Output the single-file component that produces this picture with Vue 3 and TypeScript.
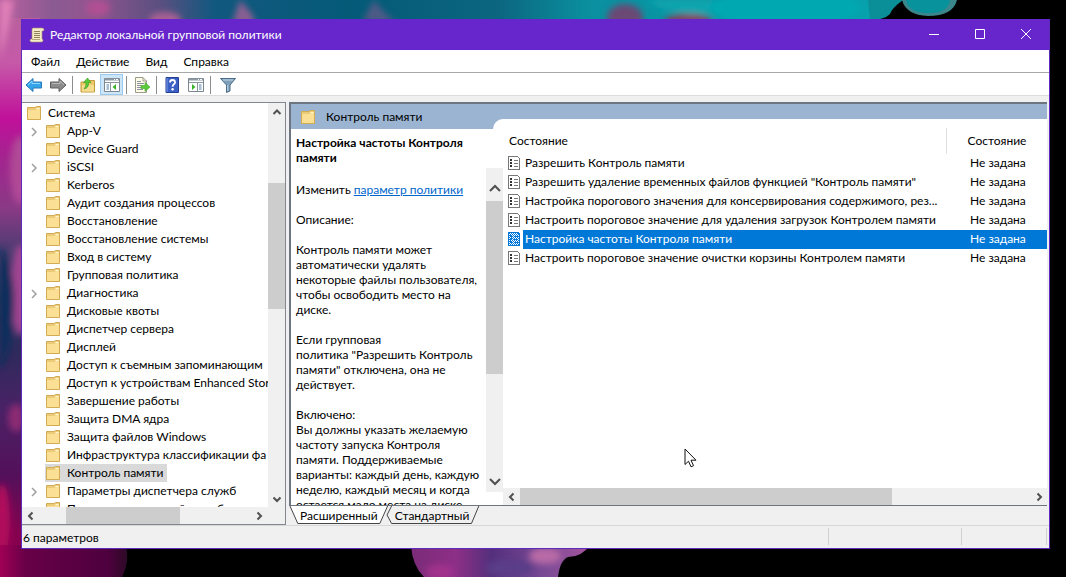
<script setup lang="ts">
import { ref } from 'vue'

interface TreeNode {
  label: string
  expandable?: boolean
}

interface Policy {
  name: string
  state: string
}

const menu: string[] = ['Файл', 'Действие', 'Вид', 'Справка']

const nodes: TreeNode[] = [
  { label: 'App-V', expandable: true },
  { label: 'Device Guard' },
  { label: 'iSCSI', expandable: true },
  { label: 'Kerberos' },
  { label: 'Аудит создания процессов' },
  { label: 'Восстановление' },
  { label: 'Восстановление системы' },
  { label: 'Вход в систему' },
  { label: 'Групповая политика' },
  { label: 'Диагностика', expandable: true },
  { label: 'Дисковые квоты' },
  { label: 'Диспетчер сервера' },
  { label: 'Дисплей' },
  { label: 'Доступ к съемным запоминающим' },
  { label: 'Доступ к устройствам Enhanced Stor' },
  { label: 'Завершение работы' },
  { label: 'Защита DMA ядра' },
  { label: 'Защита файлов Windows' },
  { label: 'Инфраструктура классификации фа' },
  { label: 'Контроль памяти' },
  { label: 'Параметры диспетчера служб', expandable: true },
  { label: 'Параметры почтовой службы' },
]

const policies: Policy[] = [
  { name: 'Разрешить Контроль памяти', state: 'Не задана' },
  { name: 'Разрешить удаление временных файлов функцией "Контроль памяти"', state: 'Не задана' },
  { name: 'Настройка порогового значения для консервирования содержимого, рез...', state: 'Не задана' },
  { name: 'Настроить пороговое значение для удаления загрузок Контролем памяти', state: 'Не задана' },
  { name: 'Настройка частоты Контроля памяти', state: 'Не задана' },
  { name: 'Настроить пороговое значение очистки корзины Контролем памяти', state: 'Не задана' },
]

const activeNode = ref('Контроль памяти')
const activePolicy = ref(4)
</script>

<template>
  <div class="desktop">
    <svg class="wallpaper" viewBox="0 0 1066 577" preserveAspectRatio="none" aria-hidden="true">
      <defs>
        <linearGradient id="wpTop" x1="0" x2="1" y1="0" y2="0">
          <stop offset="0" stop-color="#b8609e" />
          <stop offset="0.06" stop-color="#8a5a92" />
          <stop offset="0.1" stop-color="#93558f" />
          <stop offset="0.18" stop-color="#5a4f80" />
          <stop offset="0.24" stop-color="#12587f" />
          <stop offset="0.4" stop-color="#045a78" />
          <stop offset="0.56" stop-color="#0c6680" />
          <stop offset="0.66" stop-color="#0a8f9f" />
          <stop offset="1" stop-color="#06a3ad" />
        </linearGradient>
        <linearGradient id="wpLeft" x1="0" x2="0" y1="0" y2="1">
          <stop offset="0" stop-color="#b8609e" />
          <stop offset="0.08" stop-color="#c659a8" />
          <stop offset="0.18" stop-color="#c0109a" />
          <stop offset="0.25" stop-color="#a3248f" />
          <stop offset="0.34" stop-color="#8a3a86" />
          <stop offset="0.42" stop-color="#4a3c70" />
          <stop offset="0.5" stop-color="#1f335f" />
          <stop offset="0.6" stop-color="#2f2a5c" />
          <stop offset="0.7" stop-color="#4a2266" />
          <stop offset="0.82" stop-color="#54105a" />
          <stop offset="0.92" stop-color="#85024f" />
          <stop offset="1" stop-color="#8a0050" />
        </linearGradient>
        <linearGradient id="wpCorner" x1="0" x2="1" y1="0" y2="0">
          <stop offset="0" stop-color="#a00055" />
          <stop offset="0.2" stop-color="#680048" />
          <stop offset="0.85" stop-color="#4e003e" />
          <stop offset="1" stop-color="#2c0a26" />
        </linearGradient>
        <linearGradient id="wpInk" x1="0" x2="1" y1="0" y2="0">
          <stop offset="0" stop-color="#7a2b78" />
          <stop offset="0.25" stop-color="#8d2f86" />
          <stop offset="0.45" stop-color="#54307c" />
          <stop offset="0.75" stop-color="#7a4a96" />
          <stop offset="1" stop-color="#a5559b" />
        </linearGradient>
        <filter id="wpSoft"><feGaussianBlur stdDeviation="3" /></filter>
      </defs>
      <rect width="1066" height="577" fill="#000" />
      <path d="M0 0H890L873 22V40H0Z" fill="url(#wpTop)" />
      <rect y="18" width="40" height="559" fill="url(#wpLeft)" />
      <g filter="url(#wpSoft)">
        <path d="M0 0H14L8 30L0 60Z" fill="#e07fb8" />
        <ellipse cx="98" cy="8" rx="12" ry="8" fill="#b04f92" />
        <ellipse cx="165" cy="20" rx="16" ry="8" fill="#a86093" />
        <path d="M240 0L252 14L256 24H232Z" fill="#8a5f92" />
        <path d="M374 0L384 12L396 22H362Z" fill="#4d5a86" />
        <ellipse cx="625" cy="18" rx="18" ry="14" fill="#6a4a74" />
        <ellipse cx="688" cy="22" rx="24" ry="8" fill="#84405e" />
        <path d="M645 0H720L708 14H690L660 8Z" fill="#0ba5af" />
        <ellipse cx="785" cy="8" rx="75" ry="18" fill="#05a9b2" />
        <ellipse cx="20" cy="170" rx="10" ry="34" fill="#b04a96" />
        <ellipse cx="20" cy="290" rx="9" ry="46" fill="#a04590" />
        <path d="M0 245Q16 270 14 310Q12 350 0 370Z" fill="#0d2f5c" />
        <ellipse cx="16" cy="418" rx="8" ry="14" fill="#8b2a73" />
        <ellipse cx="2" cy="520" rx="8" ry="36" fill="#b00a5c" />
      </g>
      <path d="M868 0H903Q892 8 890 14Q884 20 870 20Z" fill="#0a8f99" />
      <path d="M902 0H957Q953 16 928 16Q906 15 902 0Z" fill="#3a868b" />
      <path d="M906 0H950Q948 14 926 13Q908 12 906 0Z" fill="#08929c" />
      <path d="M0 545H126Q130 562 122 577H0Z" fill="url(#wpCorner)" />
      <path d="M411 545H590Q582 557 568 557Q560 560 558 577H424Q412 565 411 545Z" fill="url(#wpInk)" />
      <g filter="url(#wpSoft)">
        <ellipse cx="440" cy="572" rx="14" ry="8" fill="#a0308c" />
        <ellipse cx="545" cy="556" rx="16" ry="8" fill="#b86aa6" />
        <ellipse cx="510" cy="568" rx="24" ry="8" fill="#5a3c88" />
      </g>
    </svg>

    <main class="window">
      <header class="titlebar">
        <svg class="app-icon" viewBox="0 0 16 16" aria-hidden="true">
          <path d="M4 1H13Q15 1 15 3Q15 4 13.500 4H13V12Q14 12 14 13.500Q14 15 12 15H3Q1 15 1 13.500Q1 12 2.500 12H3V3Q3 1 4 1Z" fill="#f4ecc8" stroke="#a9966a" stroke-width=".6" />
          <path d="M5 4.500H11M5 6.500H11M5 8.500H11M5 10.500H11" stroke="#8f8259" stroke-width="1" />
          <path d="M3 12.500H11" stroke="#b5a67c" />
        </svg>
        <h1>Редактор локальной групповой политики</h1>
        <div class="window-buttons">
          <button type="button" aria-label="Свернуть">
            <svg viewBox="0 0 12 12"><path d="M1 5.500H11" /></svg>
          </button>
          <button type="button" aria-label="Развернуть">
            <svg viewBox="0 0 12 12"><path d="M1.500 .500H10.500V9.500H1.500Z" /></svg>
          </button>
          <button type="button" aria-label="Закрыть">
            <svg viewBox="0 0 12 12"><path d="M1 0L11 10M11 0L1 10" /></svg>
          </button>
        </div>
      </header>

      <nav class="menubar">
        <button v-for="item in menu" :key="item" type="button">{{ item }}</button>
      </nav>

      <div class="toolbar" role="toolbar" aria-label="Панель инструментов">
        <button type="button" aria-label="Назад">
          <svg viewBox="0 0 18 16"><path d="M1 8L8 1.500V5H16.500V11H8V14.500Z" fill="#35a5ea" stroke="#2b78b8" /><path d="M3 8L7 4V6.500H15" fill="none" stroke="#8fd6fb" /></svg>
        </button>
        <button type="button" aria-label="Вперёд">
          <svg viewBox="0 0 18 16"><path d="M17 8L10 1.500V5H1.500V11H10V14.500Z" fill="#8b8b8b" stroke="#5f5f5f" /><path d="M3 6.500H11V4L15 8" fill="none" stroke="#b9b9b9" /></svg>
        </button>
        <span class="separator"></span>
        <button type="button" aria-label="На уровень вверх">
          <svg viewBox="0 0 18 16"><path d="M2 5H7L8 3.500H15.500V15H2Z" fill="#ecc968" stroke="#c39b3c" /><path d="M3 8H15V14.500H3Z" fill="#f6dd8d" /><path d="M5 12Q10 11 9.500 5.500H12L8.500 1L4.500 5.500H7Q7.500 9 5 12Z" fill="#58c936" stroke="#3b9a22" stroke-width=".6" /></svg>
        </button>
        <button type="button" class="pressed" aria-label="Показать дерево консоли">
          <svg viewBox="0 0 18 16"><path d="M1.500 1.500H16.500V14.500H1.500Z" fill="#fff" stroke="#7b8791" /><path d="M2 2.500H16" stroke="#8c99a3" stroke-width="2" /><path d="M11 2.500H12M13 2.500H15" stroke="#fff" /><path d="M2 5.500H16M7.500 6V14" stroke="#8a97a0" /><path d="M3.500 8H6M3.500 10H6M3.500 12H6" stroke="#4f7fae" /><path d="M13 7V13L9.500 10Z" fill="#39b52a" /></svg>
        </button>
        <span class="separator"></span>
        <button type="button" aria-label="Экспорт списка">
          <svg viewBox="0 0 18 16"><path d="M2.500.500H10L13.500 4V15.500H2.500Z" fill="#fffde9" stroke="#9b9b8a" /><path d="M10 .500V4H13.500" fill="none" stroke="#9b9b8a" /><path d="M4 4.500H8M4 6.500H11M4 8.500H8M4 10.500H8M4 12.500H10" stroke="#8b91a0" /><path d="M8 8.500H12V5.500L17 10L12 14.500V11.500H8Z" fill="#5acb3a" stroke="#42a52a" stroke-width=".6" /></svg>
        </button>
        <span class="separator"></span>
        <button type="button" aria-label="Справка">
          <svg viewBox="0 0 18 16"><path d="M3 .500H15.500V15.500H3Z" fill="#3b5fc4" stroke="#243f91" /><path d="M4 1V15" stroke="#7b98e6" /><path d="M7 5.500Q7 3 9.500 3Q12 3 12 5.200Q12 6.600 10.600 7.500Q9.600 8.200 9.600 9.800" fill="none" stroke="#fff" stroke-width="1.800" /><circle cx="9.600" cy="12.300" r="1.200" fill="#fff" /></svg>
        </button>
        <button type="button" aria-label="Показать область действий">
          <svg viewBox="0 0 18 16"><path d="M1.500 1.500H16.500V14.500H1.500Z" fill="#fff" stroke="#7b8791" /><path d="M2 2.500H16" stroke="#8c99a3" stroke-width="2" /><path d="M11 2.500H12M13 2.500H15" stroke="#fff" /><path d="M2 5.500H16M10.500 6V14" stroke="#8a97a0" /><path d="M12 8H14.500M12 10H14.500M12 12H14.500" stroke="#4f7fae" /><path d="M5 7V13L8.500 10Z" fill="#39b52a" /></svg>
        </button>
        <span class="separator"></span>
        <button type="button" class="filter" aria-label="Фильтр">
          <svg viewBox="0 0 18 16"><path d="M1.500 1.500H16.500L11 8V14L7.500 15.500V8Z" fill="#7f9fb9" stroke="#4c6c87" /><path d="M4 3H14" stroke="#c4dae9" /><path d="M8.800 8V14" stroke="#c4dae9" /></svg>
        </button>
      </div>

      <div class="workspace">
        <section class="tree-pane" aria-label="Дерево консоли">
          <div class="tree-body">
            <ul class="tree">
              <li class="root">
                <button type="button">
                  <svg class="folder" viewBox="1 0 16 16" aria-hidden="true"><path d="M1.500 2.500H9L10.500 1.500H14.500V14.500H1.500Z" fill="#eccb78" stroke="#d3ab52" /><path d="M2 5H9.500L11 3.500H14V14H2Z" fill="#fbdf95" /><path d="M10.500 3.500H13.500" stroke="#fff6d6" /></svg>
                  <span>Система</span>
                </button>
              </li>
              <li v-for="node in nodes" :key="node.label">
                <svg v-if="node.expandable" class="chevron" viewBox="0 0 8 10" aria-hidden="true"><path d="M2 2L6 6L2 10" /></svg>
                <button type="button" :class="{ active: node.label === activeNode }" @click="activeNode = node.label">
                  <svg class="folder" viewBox="1 0 16 16" aria-hidden="true"><path d="M1.500 2.500H9L10.500 1.500H14.500V14.500H1.500Z" fill="#eccb78" stroke="#d3ab52" /><path d="M2 5H9.500L11 3.500H14V14H2Z" fill="#fbdf95" /><path d="M10.500 3.500H13.500" stroke="#fff6d6" /></svg>
                  <span>{{ node.label }}</span>
                </button>
              </li>
            </ul>
            <div class="scroll vertical">
              <button type="button" aria-label="Вверх"><svg viewBox="0 0 10 10"><path d="M1.500 7L5 3.500L8.500 7" /></svg></button>
              <div class="track"><div class="thumb tree-thumb"></div></div>
              <button type="button" aria-label="Вниз"><svg viewBox="0 0 10 10"><path d="M1.500 3.500L5 7L8.500 3.500" /></svg></button>
            </div>
          </div>
          <div class="scroll horizontal tree-hscroll">
            <button type="button" aria-label="Влево"><svg viewBox="0 0 10 10"><path d="M6.500 1.500L3 5L6.500 8.500" /></svg></button>
            <div class="track"><div class="thumb tree-hthumb"></div></div>
            <button type="button" aria-label="Вправо"><svg viewBox="0 0 10 10"><path d="M3.500 1.500L7 5L3.500 8.500" /></svg></button>
          </div>
        </section>

        <section class="result-pane">
          <div class="result-view">
            <header class="result-header">
              <svg class="folder" viewBox="1 0 16 16" aria-hidden="true"><path d="M1.500 2.500H9L10.500 1.500H14.500V14.500H1.500Z" fill="#eccb78" stroke="#d3ab52" /><path d="M2 5H9.500L11 3.500H14V14H2Z" fill="#fbdf95" /><path d="M10.500 3.500H13.500" stroke="#fff6d6" /></svg>
              <h2>Контроль памяти</h2>
            </header>

            <div class="description">
              <div class="description-text">
                <h3>Настройка частоты Контроля<br />памяти</h3>
                <p>Изменить <a href="#policy">параметр политики</a></p>
                <p>Описание:</p>
                <p>Контроль памяти может<br />автоматически удалять<br />некоторые файлы пользователя,<br />чтобы освободить место на<br />диске.</p>
                <p>Если групповая<br />политика "Разрешить Контроль<br />памяти" отключена, она не<br />действует.</p>
                <p>Включено:<br />Вы должны указать желаемую<br />частоту запуска Контроля<br />памяти. Поддерживаемые<br />варианты: каждый день, каждую<br />неделю, каждый месяц и когда<br />остается мало места на диске.</p>
              </div>
              <div class="scroll vertical wide">
                <button type="button" aria-label="Вверх"><svg viewBox="0 0 14 14"><path d="M2 10L7 5L12 10" /></svg></button>
                <div class="track"><div class="thumb description-thumb"></div></div>
                <button type="button" aria-label="Вниз"><svg viewBox="0 0 14 14"><path d="M2 4L7 9L12 4" /></svg></button>
              </div>
            </div>

            <div class="list">
              <table>
                <colgroup>
                  <col class="col-icon" />
                  <col />
                  <col class="col-state" />
                </colgroup>
                <thead>
                  <tr>
                    <th colspan="2" scope="col">Состояние</th>
                    <th class="state-head" scope="col">Состояние</th>
                  </tr>
                </thead>
                <tbody>
                  <tr v-for="(policy, index) in policies" :key="policy.name" :class="{ selected: index === activePolicy }" @click="activePolicy = index">
                    <td class="icon-cell">
                      <svg viewBox="0 0 14 16" aria-hidden="true" shape-rendering="crispEdges">
                        <path class="page" d="M1.500 1.500H10.500L12.500 3.500V14.500H1.500Z" />
                        <path class="bullets" d="M3 5H5M3 8H5M3 11H5" />
                        <path class="lines" d="M7 5.500H11M7 8.500H11M7 11.500H11" />
                        <path v-if="index === activePolicy" class="dither" d="M1 1.500H13M1 3.500H13M1 5.500H13M1 7.500H13M1 9.500H13M1 11.500H13M1 13.500H13" />
                        <path v-if="index === activePolicy" class="dither" d="M2 2.500H13M2 4.500H13M2 6.500H13M2 8.500H13M2 10.500H13M2 12.500H13M2 14.500H13" />
                      </svg>
                    </td>
                    <td class="name">{{ policy.name }}</td>
                    <td class="state">{{ policy.state }}</td>
                  </tr>
                </tbody>
              </table>
              <div class="scroll horizontal list-hscroll">
                <button type="button" aria-label="Влево"><svg viewBox="0 0 10 10"><path d="M6.500 1.500L3 5L6.500 8.500" /></svg></button>
                <div class="track"><div class="thumb list-thumb"></div></div>
                <button type="button" aria-label="Вправо"><svg viewBox="0 0 10 10"><path d="M3.500 1.500L7 5L3.500 8.500" /></svg></button>
              </div>
            </div>
          </div>

          <div class="tabs" role="tablist">
            <button type="button" role="tab" aria-selected="true" class="tab current">
              <svg viewBox="0 0 100 18" preserveAspectRatio="none" aria-hidden="true"><path d="M0 0L8 17.500H92L100 0" fill="#fff" stroke="#444" vector-effect="non-scaling-stroke" /></svg>
              <span>Расширенный</span>
            </button>
            <button type="button" role="tab" aria-selected="false" class="tab">
              <svg viewBox="0 0 100 18" preserveAspectRatio="none" aria-hidden="true"><path d="M5 0L0 9L5 17.500H92L100 0" fill="#f0f0f0" stroke="#444" vector-effect="non-scaling-stroke" /></svg>
              <span>Стандартный</span>
            </button>
          </div>
        </section>
      </div>

      <footer class="statusbar">
        <span class="status-main">6 параметров</span>
        <span class="status-cell"></span>
        <span class="status-cell small"></span>
      </footer>
    </main>

    <svg class="cursor" viewBox="0 0 13 20" aria-hidden="true">
      <path d="M1 1V16.500L4.500 13.200L7 18.800L9.500 17.700L7 12.200H12Z" fill="#fff" stroke="#111" />
    </svg>
  </div>
</template>

<style>
html,
body {
  margin: 0;
  background: #000;
}
</style>

<style scoped>
.desktop {
  position: relative;
  box-sizing: border-box;
  height: 100vh;
  padding: 19px 16px 28px 21px;
  overflow: hidden;
  font-family: Lato, "Open Sans", "Noto Sans", sans-serif;
  font-size: 12px;
  line-height: 15px;
  color: #000;
}

.desktop *,
.desktop *::before {
  box-sizing: border-box;
}

.wallpaper {
  position: absolute;
  inset: 0;
  width: 100%;
  height: 100%;
}

.window {
  position: relative;
  display: flex;
  flex-direction: column;
  height: 100%;
  border: 1px solid #5f2bbd;
  border-top: 0;
  background: #f0f0f0;
}

button {
  margin: 0;
  padding: 0;
  border: 0;
  background: none;
  font: inherit;
  color: inherit;
}

h1,
h2,
h3,
p {
  margin: 0;
  font-size: 12px;
  font-weight: 400;
}

.titlebar {
  display: flex;
  flex: none;
  align-items: center;
  height: 31px;
  padding-left: 7px;
  background: #6626cb;
  color: #fff;
}

.app-icon {
  width: 16px;
  height: 16px;
  margin-right: 5px;
}

.window-buttons {
  display: flex;
  margin-left: auto;
}

.window-buttons button {
  display: grid;
  place-items: center;
  width: 46px;
  height: 31px;
}

.window-buttons svg {
  width: 12px;
  height: 12px;
  fill: none;
  stroke: #fff;
}

.menubar {
  display: flex;
  flex: none;
  gap: 16px;
  height: 23px;
  padding: 0 9px;
  border-bottom: 1px solid #a8a8a8;
  background: #fff;
}

.toolbar {
  display: flex;
  flex: none;
  gap: 1px;
  align-items: center;
  height: 23px;
  padding-top: 1px;
  border-bottom: 1px solid #dcdcdc;
  background: #fff;
}

.toolbar button {
  display: grid;
  place-items: center;
  width: 23px;
  height: 21px;
}

.toolbar button.pressed {
  border: 1px solid #99c9ef;
  background: #cce6f8;
}

.toolbar button.filter {
  width: 27px;
}

.toolbar svg {
  width: 18px;
  height: 16px;
}

.separator {
  width: 1px;
  height: 18px;
  margin: 0 2px;
  background: #8d8d8d;
}

.workspace {
  display: flex;
  flex: 1;
  gap: 3px;
  min-height: 0;
  padding-top: 6px;
}

.tree-pane {
  display: flex;
  flex: none;
  flex-direction: column;
  width: 264px;
  border: 1px solid #828790;
  border-left: 0;
  background: #fff;
}

.tree-body {
  display: flex;
  flex: 1;
  min-height: 0;
}

.tree {
  flex: 1;
  min-width: 0;
  margin: 0;
  padding: 1px 0 0;
  overflow: hidden;
  list-style: none;
}

.tree li {
  display: flex;
  align-items: center;
  height: 18px;
  padding-left: 23px;
}

.tree li button {
  display: flex;
  flex: none;
  align-items: center;
  width: max-content;
  height: 18px;
  padding: 0 4px 0 1px;
  white-space: nowrap;
}

.tree li span {
  padding-bottom: 2px;
}

.tree li.root {
  padding-left: 4px;
}

.tree li:has(.chevron) {
  padding-left: 8px;
}

.tree button.active {
  background: #d9d9d9;
}

.folder {
  flex: none;
  width: 16px;
  height: 16px;
  margin-right: 5px;
}

.chevron {
  flex: none;
  width: 8px;
  height: 10px;
  margin-right: 7px;
  overflow: visible;
  fill: none;
  stroke: #a0a0a0;
  stroke-width: 1.5;
}

.scroll {
  display: flex;
  flex: none;
  background: #f0f0f0;
}

.scroll button {
  display: grid;
  flex: none;
  place-items: center;
  width: 17px;
  height: 17px;
}

.scroll svg {
  width: 10px;
  height: 10px;
  fill: none;
  stroke: #505050;
  stroke-width: 2;
}

.track {
  display: flex;
  flex: 1;
}

.thumb {
  background: #cdcdcd;
}

.vertical {
  flex-direction: column;
  align-self: stretch;
  width: 17px;
}

.vertical .track {
  flex-direction: column;
}

.tree-thumb {
  height: 34%;
  margin-top: 63px;
}

.tree-hscroll {
  padding-right: 18px;
  height: 17px;
}

.tree-hthumb {
  width: 54%;
  margin-left: 27px;
}

.result-pane {
  display: flex;
  flex: 1;
  flex-direction: column;
  min-width: 0;
  margin-right: 2px;
}

.result-view {
  display: grid;
  flex: 1;
  grid-template-columns: 212px 1fr;
  grid-template-rows: 15px 10px 1fr;
  min-height: 0;
  border: 1px solid #6d7580;
  border-top-width: 2px;
  border-left-width: 2px;
  border-right: 0;
  background: #fff;
}

.result-header {
  display: flex;
  grid-row: 1 / 3;
  grid-column: 1 / 3;
  align-items: center;
  padding-left: 10px;
  background: #9ab4d1;
}

.result-header .folder {
  margin-right: 9px;
}

.description {
  display: flex;
  grid-row: 3;
  grid-column: 1;
  min-height: 0;
}

.description-text {
  display: flex;
  flex: 1;
  flex-direction: column;
  gap: 15px;
  min-width: 0;
  padding: 6px 0 0 5px;
  overflow: hidden;
  white-space: nowrap;
}

.description-text > * {
  flex: none;
}

h3 {
  margin-bottom: 2px;
  font-weight: 700;
}

a {
  color: #0066cc;
}

.wide {
  margin: 39px 0 13px;
}

.wide button {
  height: 33px;
  padding-top: 6px;
}

.wide button:last-child {
  height: 20px;
  padding: 0;
}

.wide svg {
  width: 14px;
  height: 14px;
}

.description-thumb {
  height: 64%;
}

.list {
  display: flex;
  grid-row: 2 / 4;
  grid-column: 2;
  flex-direction: column;
  justify-content: space-between;
  min-width: 0;
  margin-left: -10px;
  padding-left: 10px;
  border-top-left-radius: 10px;
  background: #fff;
  clip-path: polygon(0 0, 100% 0, 100% 100%, 10px 100%, 10px 10px, 0 10px);
}

table {
  width: 100%;
  margin-top: 9px;
  border-collapse: collapse;
  table-layout: fixed;
}

.col-icon {
  width: 20px;
}

.col-state {
  width: 101px;
}

th {
  height: 26px;
  padding: 0 0 2px 6px;
  font-weight: 400;
  text-align: left;
}

th.state-head {
  padding-left: 21px;
  border-left: 1px solid #e0e0e0;
}

td {
  height: 19px;
  padding: 0 0 2px;
  white-space: nowrap;
}

.icon-cell svg {
  display: block;
  width: 14px;
  height: 16px;
  margin-left: 4px;
}

.page {
  fill: #fff;
  stroke: #777;
}

.bullets {
  stroke: #333;
  stroke-width: 2;
}

.lines {
  stroke: #777;
}

.selected .page,
.selected .lines,
.selected .bullets {
  stroke: #0078d7;
}

.dither {
  stroke: #0078d7;
  stroke-dasharray: 1 1;
}

td.name {
  padding-left: 2px;
}

td.state {
  padding-left: 24px;
}

.selected td + td {
  background: #0078d7;
  color: #fff;
}

.list-hscroll {
  height: 17px;
}

.list-thumb {
  width: 73%;
}

.tabs {
  display: flex;
  flex: none;
  height: 19px;
  padding-left: 1px;
}

.tab {
  position: relative;
  height: 18px;
  padding: 0 10px;
}

.tab.current {
  z-index: 1;
}

.tab + .tab {
  margin-left: -1px;
  padding: 0 9px 0 8px;
}

.tab svg {
  position: absolute;
  inset: 0;
  width: 100%;
  height: 100%;
  overflow: visible;
}

.tab span {
  position: relative;
}

.statusbar {
  display: flex;
  flex: none;
  height: 23px;
  padding-right: 2px;
  border-top: 1px solid #d7d7d7;
  line-height: 24px;
}

.status-main {
  flex: 1;
  padding-left: 1px;
}

.status-cell {
  width: 133px;
  margin: 2px 0 3px;
  border-left: 1px solid #d0d0d0;
}

.status-cell.small {
  width: 86px;
  border-right: 1px solid #d0d0d0;
}

.cursor {
  position: absolute;
  left: 684px;
  top: 448px;
  width: 13px;
  height: 20px;
}
</style>
